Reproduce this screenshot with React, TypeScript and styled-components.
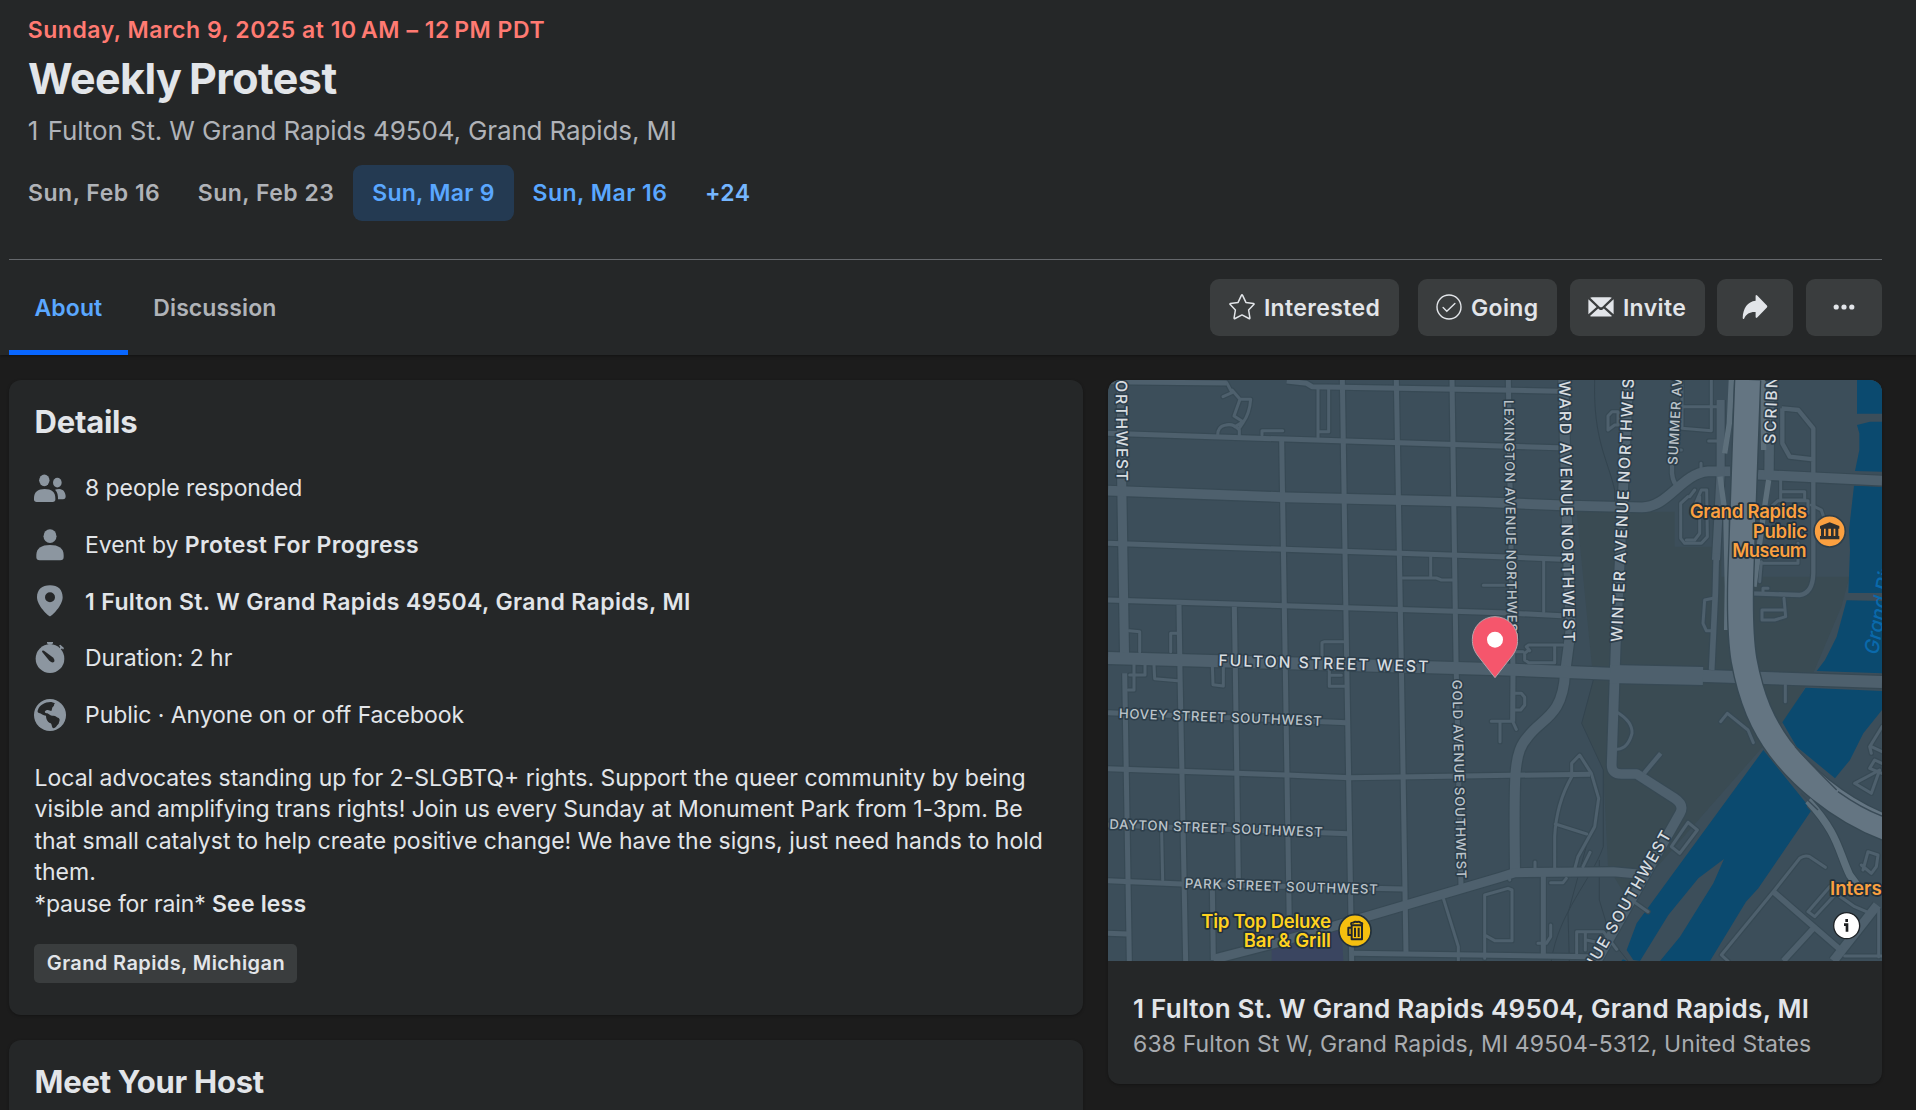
import React from "react";
import styled, { createGlobalStyle } from "styled-components";

const GlobalStyle = createGlobalStyle`
  *, *::before, *::after { box-sizing: border-box; }
  body {
    margin: 0;
    background: #1c1c1c;
    color: #e2e5e9;
    font-family: Inter, "Liberation Sans", sans-serif;
    font-size: 23px;
    overflow: hidden;
  }
`;

const Page = styled.div`
  width: 1916px;
  height: 1110px;
  overflow: hidden;
  display: flex;
  flex-direction: column;
  background: #1c1c1c;
`;

const Header = styled.header`
  flex: none;
  height: 355px;
  padding: 15.4px 34px 0 9px;
  background: #252728;
  display: flex;
  flex-direction: column;
  box-shadow: 0 1px 3px rgba(0, 0, 0, 0.35);
`;

const EventDate = styled.div`
  padding-left: 18.7px;
  line-height: 30px;
  font-weight: 600;
  letter-spacing: 0.53px;
  color: #ff7a72;
  white-space: pre;
`;

const EventTitle = styled.h1`
  margin: 7.6px 0 0;
  padding-left: 19px;
  font-size: 43px;
  line-height: 50px;
  font-weight: 700;
  letter-spacing: -0.55px;
  word-spacing: -2px;
  color: #e2e5e9;
`;

const EventPlace = styled.div`
  margin-top: 12.4px;
  padding-left: 18.7px;
  font-size: 26px;
  line-height: 32px;
  letter-spacing: -0.13px;
  color: #b0b3b8;
`;

const HouseNumber = styled.span`
  margin-right: 2.4px;
`;

const DateRow = styled.nav`
  display: flex;
  margin-top: 17.6px;
  padding-left: 0.4px;
`;

type Tone = "past" | "active" | "next" | "more";

const DateChip = styled.button<{ $tone: Tone }>`
  height: 56px;
  padding: 0 ${(p) => (p.$tone === "active" ? 19 : 18.7)}px;
  border: 0;
  border-radius: 9px;
  font: inherit;
  font-weight: 600;
  letter-spacing: ${(p) => (p.$tone === "active" ? 0.28 : 0.5)}px;
  white-space: nowrap;
  background: ${(p) => (p.$tone === "active" ? "#243a52" : "transparent")};
  color: ${(p) => (p.$tone === "past" ? "#b0b3b8" : p.$tone === "more" ? "#75b6ff" : "#5aa7ff")};
`;

const Divider = styled.div`
  height: 1px;
  margin-top: 38px;
  background: #65686c;
`;

const Toolbar = styled.div`
  flex: 1;
  display: flex;
  justify-content: space-between;
`;

const Tabs = styled.div`
  display: flex;
`;

const Tab = styled.div<{ $active?: boolean }>`
  display: flex;
  align-items: center;
  padding: 2px 25.5px 0;
  border-top: 5px solid transparent;
  border-bottom: 5px solid ${(p) => (p.$active ? "#0866ff" : "transparent")};
  font-weight: 600;
  letter-spacing: 0.1px;
  color: ${(p) => (p.$active ? "#5aa7ff" : "#b0b3b8")};
`;

const Actions = styled.div`
  display: flex;
  align-items: center;
  gap: 12.75px;
`;

const ActionButton = styled.button<{ $width: number; $after?: number }>`
  display: flex;
  align-items: center;
  justify-content: center;
  gap: 9px;
  width: ${(p) => p.$width}px;
  height: 57px;
  margin-right: ${(p) => p.$after ?? 0}px;
  padding: 0;
  border: 0;
  border-radius: 9px;
  background: #3a3d3e;
  color: #e2e5e9;
  font: inherit;
  font-weight: 600;
  letter-spacing: 0.36px;
  span {
    padding-top: 1.5px;
  }
`;

const Columns = styled.main`
  display: grid;
  grid-template-columns: 1074px 774px;
  column-gap: 25px;
  align-items: start;
  padding: 25px 0 0 9px;
`;

const Stack = styled.div`
  display: flex;
  flex-direction: column;
  gap: 25px;
`;

const Card = styled.section<{ $height: number }>`
  height: ${(p) => p.$height}px;
  padding: 22.7px 25px 0;
  border-radius: 12px;
  background: #252728;
  box-shadow: 0 1px 3px rgba(0, 0, 0, 0.3);
`;

const CardTitle = styled.h2`
  margin: 0;
  padding-left: 0.6px;
  font-size: 31px;
  line-height: 38px;
  font-weight: 700;
  letter-spacing: -0.26px;
`;

const Facts = styled.ul`
  list-style: none;
  margin: 18.9px 0 0;
  padding: 0;
`;

const Fact = styled.li<{ $strong?: boolean }>`
  display: flex;
  align-items: center;
  gap: 19px;
  height: 56.7px;
  font-weight: ${(p) => (p.$strong ? 600 : 400)};
  letter-spacing: ${(p) => (p.$strong ? "0.38px" : "-0.06px")};
  > span {
    padding-top: 0.8px;
  }
  b {
    font-weight: 600;
    letter-spacing: 0.38px;
  }
`;

const Description = styled.p`
  margin: 19.7px 0 0;
  padding-left: 0.5px;
  line-height: 31.45px;
  white-space: pre;
  b {
    font-weight: 600;
    letter-spacing: 0.18px;
  }
`;

const Tight = styled.span<{ $by: number }>`
  letter-spacing: ${(p) => -p.$by}px;
`;

const Tag = styled.span`
  display: inline-flex;
  align-items: center;
  height: 39px;
  margin-top: 24px;
  padding: 0 12px 0 12.8px;
  border-radius: 5px;
  background: #3a3d3e;
  font-size: 20px;
  font-weight: 600;
  letter-spacing: 0.39px;
`;

const PlaceCard = styled.section`
  height: 703.5px;
  border-radius: 12px;
  overflow: hidden;
  background: #252728;
  box-shadow: 0 1px 3px rgba(0, 0, 0, 0.3);
`;

const MapCanvas = styled.svg`
  display: block;
  width: 774px;
  height: 581px;
  font-family: Inter, "Liberation Sans", sans-serif;
`;

const PlaceInfo = styled.div`
  padding: 30.6px 25px 0;
`;

const PlaceName = styled.div`
  font-size: 26px;
  line-height: 34px;
  font-weight: 600;
  letter-spacing: 0.26px;
`;

const PlaceAddress = styled.div`
  margin-top: 1px;
  line-height: 34px;
  letter-spacing: 0.12px;
  color: #a9acb0;
`;

const StarIcon = () => (
  <svg width="26" height="26" viewBox="0 0 26 26" fill="none" stroke="#e2e5e9" strokeWidth="1.5" strokeLinejoin="round">
    <path d="M12.4 1.4Q13 .3 13.6 1.4L16.9 8.4 24.5 9.4Q25.6 9.7 24.8 10.6L19.6 16 20.9 23.8Q21 25 19.9 24.5L13 20.9 6.1 24.5Q5 25 5.1 23.8L6.4 16 1.2 10.6Q.4 9.7 1.5 9.4L9.1 8.4Z" />
  </svg>
);

const GoingIcon = () => (
  <svg width="26" height="26" viewBox="0 0 26 26" fill="none" stroke="#e2e5e9" strokeWidth="1.4" strokeLinecap="round">
    <circle cx="13" cy="13" r="12" />
    <path d="M7.1 13.6 10.8 17.2 18.9 9.4" />
  </svg>
);

const MailIcon = () => (
  <svg width="26" height="20" viewBox="0 0 26 20" fill="#e2e5e9">
    <path d="M2.2.7Q3 .3 4 .3H22Q23 .3 23.8.7L14.2 9.9Q13 10.8 11.8 9.9Z" />
    <path d="M.4 2.2 8.6 9.9.4 17.2Z" />
    <path d="M25.6 2.2 17.4 9.9 25.6 17.2Z" />
    <path d="M2 19.1 10.2 11.6 11.3 12.4Q13 13.4 14.7 12.4L15.8 11.6 24 19.1Q23.2 19.6 22 19.6H4Q2.8 19.6 2 19.1Z" />
  </svg>
);

const ShareIcon = () => (
  <svg width="26" height="26" viewBox="0 0 26 26" fill="#e2e5e9">
    <path d="M13.6 2.2Q13.6.4 15.2 1.4L24.9 11.6Q25.8 12.6 24.9 13.6L15.2 23.6Q13.6 24.6 13.6 22.8V18.1C7.8 17.8 4.6 19.9 2.2 24.4Q1 25.8.7 24C.9 14.6 5.6 7.5 13.6 6.8Z" />
  </svg>
);

const DotsIcon = () => (
  <svg width="24" height="8" viewBox="0 0 24 8" fill="#e2e5e9">
    <circle cx="4.2" cy="4" r="2.6" />
    <circle cx="12" cy="4" r="2.6" />
    <circle cx="19.8" cy="4" r="2.6" />
  </svg>
);

const FactIcon = ({ children }: { children: React.ReactNode }) => (
  <svg width="32" height="32" viewBox="0 0 96 96" fill="#8c96a0">
    {children}
  </svg>
);

const Map = () => (
  <MapCanvas viewBox="0 0 2322 1743">
    <rect width="2322" height="1743" fill="#3c4e5a" />
    <path
      fill="#3a4b53"
      d="M1406 395H1700V500H1840V590H2225L2200 680 2120 870 2040 1010 1956 1110 1560 1560 1500 1460 1486 1170 1421 1030 1456 900Z"
    />
    <path fill="#3a4560" d="M491 1640H700L706 1743H491Z" />
    <g fill="#0b4a6f">
      <path d="M2247 0H2322V102H2247ZM2247 135 2286 125H2322V275L2241 273 2254 210V160ZM2238 317 2322 320V645L2221 640 2226 510 2223 450ZM2216 660 2322 663V880L2126 873 2151 840 2186 770Z" />
      <path d="M2093 923 2322 933V990L2266 1060 2226 1140 2181 1195 2066 1100 2023 1027Z" />
      <path d="M1966 1110 2111 1290 1951 1525 1914 1565 1806 1743H1656L1716 1670 1816 1510 1848 1437 1771 1495 1681 1605 1596 1743 1576 1740 1556 1710 1586 1630Z" />
      <path d="M1540 1743 1545 1738 1556 1743Z" />
    </g>
    <g fill="none" stroke="#33444f" strokeWidth="3">
      <path d="M1460 0C1455 180 1500 240 1520 330V390" />
      <path d="M1456 900 1421 1030 1486 1170V1400C1450 1500 1350 1600 1330 1743M1474 1440V1560L1510 1680 1560 1743M1384 1743 1380 1600 1440 1380" />
    </g>

    {/* Casings are drawn first so that crossings stay open. */}
    {[true, false].map((casing) => {
      const extra = casing ? 7 : 0;
      return (
        <g key={String(casing)} fill="none" stroke={casing ? "#374954" : "#4e606d"} strokeLinejoin="round" strokeLinecap="round">
          <g strokeWidth={9 + extra}>
            <path d="M356 8 372 38 345 50M372 30 396 58H428Q425 100 405 128L395 143M396 58 378 108 405 125M329 165Q330 140 350 136 375 128 394 150V165M405 125 380 140" />
            <path d="M462 165V152H524M630 20V172M662 25V155H632" />
            <path d="M968 530V592M884 594H985L1000 600H1034M1126 616H1200M1307 540V695" />
            <path d="M64 752 95 755V815M207 760H188V815M642 830V788L650 785H706" />
            <path d="M111 850V885H65M60 930H78V850M138 855 140 896 209 902M313 855 315 914 346 918V855M664 870V919H710M668 886H700" />
            <path d="M161 1360 164 1500M1006 1555 1051 1700V1743M1200 1477 1205 1500" />
            <path d="M1260 812 1250 820V840L1262 848H1340M1265 812 1255 800 1262 795H1365M1340 800V848M1215 815H1245" />
            <path d="M1222 940H1240L1250 952V975L1238 990H1220M1150 1024H1214L1225 1048M1176 1024V1085" />
            <path d="M1525 995Q1575 1025 1572 1060 1560 1105 1528 1108" />
            <path d="M1391 1180V1150L1415 1125 1450 1180 1472 1255 1460 1340 1410 1430 1398 1475M1391 1190Q1345 1270 1340 1370V1470M1342 1332 1436 1362M1446 1417 1425 1460" />
            <path d="M1281 1446V1468M1130 1545 1200 1525 1212 1530V1682H1160L1130 1665ZM1328 1508H1365L1375 1495M1328 1635V1670L1315 1690H1290M1130 1665V1735M1406 1720V1655H1486L1526 1708M1432 1660V1710M1435 1680 1480 1690M1570 1560 1620 1595" />
            <path d="M1740 1327 1768 1350 1715 1420 1690 1400ZM1838 1025 1858 1000 1920 1050 1936 1088M2032 915V965" />
            <path d="M1500 150V108L1512 95H1530V135H1520Z" />
            <path d="M1722 80H1832M1722 0V145L1810 152V0M1802 183H1826M1779 280V250M1760 330 1745 350M1750 400 1780 330H1796L1798 470 1780 490H1730L1718 475V370L1740 350M1775 350V460L1760 480H1735M1720 210H1710" />
            <path d="M2018 300V360H2090V335H2020M1990 380 2010 362H2100V400M2110 375 2140 390 2150 420M1950 550H2070V490M1960 545 1955 605M1965 640V625H1980M2028 655 2033 710 2000 720 1962 720V690H2025M1815 655 1790 660 1785 730 1795 752H1810" />
            <path d="M2152 1462 2105 1430Q2090 1424 2075 1435L2000 1530 1840 1725 1860 1743M2290 1120 2285 1100 2322 1040M2290 1100 2322 1115M2240 1210 2315 1170 2290 1240ZM2322 1180 2285 1165 2300 1140 2322 1150M2265 1470 2280 1415 2310 1425 2305 1460 2290 1480 2260 1455M2165 1520 2100 1595 2120 1610 2185 1540M2190 1545 2240 1580 2275 1595" />
            <path d="M2210 1728H2322M2312 1590V1730" />
          </g>
          <g strokeWidth={15 + extra} strokeLinecap="butt">
            <path d="M213 675 216 880 233 1743M379 680 382 870 391 1500M521 180 532 870 544 1640M703 0 716 840 731 1743M865 0 880 860 894 1720M1032 0 1044 840 1059 1520M1201 0 1215 880 1214 1025" />
            <path d="M50 880 64 1743M313 1520 316 1740M1306 1480V1725" />
            <path d="M0 5 356 9M536 3 596 10 612 20 1176 30 1356 34M0 160 1176 198 1351 203M0 490 1176 530 1361 538M0 660 1176 698 1361 707" />
            <path d="M0 998 716 1028M0 1166 536 1185 726 1193 1116 1187 1446 1183M0 1335 721 1361M0 1502 221 1512 886 1527M0 1660 58 1662M736 1720 1446 1730" />
            <path d="M2021 85 2071 90 2116 145V580Q2114 640 2075 645L1930 640M2023 85V190L2045 230 2116 238M1692 240V280Q1695 310 1710 320M1608 1180 1658 1120" strokeWidth={13 + extra} />
          </g>
          <g strokeLinecap="butt">
            <path strokeWidth={27 + extra} d="M40 0 41 300 50 850" />
            <path strokeWidth={29 + extra} d="M0 332 536 352 1116 366 1386 377 1600 382C1680 384 1720 280 1800 274H1866M1950 284 2322 302" />
            <path strokeWidth={30 + extra} d="M1366 0 1376 400 1388 750 1371 880C1365 1010 1300 1015 1260 1070 1215 1120 1218 1180 1221 1478" />
            <path strokeWidth={29 + extra} d="M1561 0 1523 800 1511 1155Q1511 1182 1540 1182H1586L1700 1255Q1730 1275 1716 1300L1466 1743" />
            <path strokeWidth={27 + extra} d="M316 1738 500 1690 776 1610 1176 1492 1221 1478 1516 1475 1590 1482M2176 1743 2308 1575" />
            <path strokeWidth={17 + extra} d="M1996 1535 2200 1712M2026 1743 2116 1645" />
            <path strokeWidth={36 + extra} d="M0 834 1176 868 1506 881 1796 888 2322 906" />
            <path strokeWidth={54 + extra} d="M1506 882 1785 888" />
            <path strokeWidth={24 + extra} d="M1838 60 1838 280 1824 540" />
            <path strokeWidth={17 + extra} d="M1825 520 1822 640 1811 870" />
            <path strokeWidth={28 + extra} d="M1985 60 1983 285" />
          </g>
        </g>
      );
    })}
    <path stroke="#3c4e5a" strokeWidth="22" d="M2248 112H2322M2210 650H2322" />

    <g fill="none">
      <path stroke="#5d6f7b" strokeWidth="16" d="M1870 0 1864 130 1850 220M1836 290 1854 420 1858 620 1856 750M1982 300 1964 420 1938 620M1965 0 1967 210" />
      <path stroke="#374954" strokeWidth="82" d="M1919 0 1911 220 1898 600C1896 700 1898 780 1908 840 1930 960 1965 1035 2016 1105 2070 1175 2180 1285 2340 1345" />
      <path stroke="#647582" strokeWidth="74" d="M1919 0 1911 220 1898 600C1896 700 1898 780 1908 840 1930 960 1965 1035 2016 1105 2070 1175 2180 1285 2340 1345" />
      <path stroke="#374954" strokeWidth="28" d="M2106 1270C2190 1360 2190 1410 2225 1485L2250 1520" />
      <path stroke="#5d6f7b" strokeWidth="22" d="M2100 1262C2190 1360 2190 1410 2225 1485L2255 1525" />
      <path stroke="#3a4b57" strokeWidth="4" d="M2061 1100Q2120 1165 2186 1230M2190 1235Q2260 1285 2322 1308M2078 1240 2130 1290" />
    </g>

    <g fill="#d8dde1" stroke="#2d3e4a" strokeWidth="10" strokeLinejoin="round" fontWeight="550" style={{ paintOrder: "stroke" }}>
      <g fontSize="47">
        <text transform="translate(23 1) rotate(89.4)" textLength="302">ORTHWEST</text>
        <text transform="translate(1353 3) rotate(89)" textLength="783">WARD AVENUE NORTHWEST</text>
        <text transform="translate(1542 787) rotate(-87.4)" textLength="828">WINTER AVENUE NORTHWEST</text>
        <text transform="translate(2002 192) rotate(-88)" textLength="202">SCRIBN</text>
        <text transform="translate(331 857) rotate(1.75)" textLength="630">FULTON STREET WEST</text>
        <text transform="translate(1453 1778) rotate(-60.1)" textLength="477">NUE SOUTHWEST</text>
      </g>
      <g fontSize="39.5" fill="#bcc4ca" fontWeight="500">
        <text transform="translate(1188 60) rotate(89.1)" textLength="724">LEXINGTON AVENUE NORTHWEST</text>
        <text transform="translate(1708 255) rotate(-86.9)" textLength="262">SUMMER AV</text>
        <text transform="translate(1033 900) rotate(88.7)" textLength="596">GOLD AVENUE SOUTHWEST</text>
        <text transform="translate(32 1014) rotate(2.2)" textLength="609">HOVEY STREET SOUTHWEST</text>
        <text transform="translate(4 1346) rotate(2.2)" textLength="640">DAYTON STREET SOUTHWEST</text>
        <text transform="translate(230 1524) rotate(1.8)" textLength="579">PARK STREET SOUTHWEST</text>
      </g>
    </g>
    <text transform="translate(2310 826) rotate(-80)" fontSize="60" fontStyle="italic" fontWeight="500" fill="#0a69ab">Grand River</text>

    <g fontSize="56" fontWeight="600" stroke="#22303a" strokeWidth="10" strokeLinejoin="round" style={{ paintOrder: "stroke" }}>
      <g fill="#fba040">
        <text x="1745" y="415" textLength="352">Grand Rapids</text>
        <text x="1934" y="473" textLength="163">Public</text>
        <text x="1873" y="532" textLength="223">Museum</text>
        <text x="2166" y="1545">Intersection</text>
      </g>
      <g fill="#ffd21f">
        <text x="280" y="1643" textLength="389">Tip Top Deluxe</text>
        <text x="407" y="1702" textLength="262">Bar &amp; Grill</text>
      </g>
    </g>

    <circle cx="2165" cy="454" r="47" fill="#fba040" stroke="#2d3e4a" strokeWidth="5" />
    <g fill="#2d2f30">
      <path d="M2136 446V438L2165 427 2194 438V446ZM2139 446H2148V468H2139ZM2153 446H2161V468H2153ZM2169 446H2177V468H2169ZM2182 446H2191V468H2182ZM2136 468H2194V478H2136Z" />
    </g>
    <circle cx="741" cy="1652" r="48" fill="#f5bf0f" stroke="#22303a" strokeWidth="5" />
    <g fill="none" stroke="#22262a" strokeWidth="6" strokeLinejoin="round">
      <path d="M731 1636H762V1678H731ZM730 1634Q727 1627 736 1628 740 1624 747 1626 755 1624 757 1628 765 1628 762 1634M731 1643H721V1665H731M741 1643V1671M752 1643V1671" />
    </g>

    <circle cx="2216" cy="1637" r="39" fill="#fff" stroke="#1d2226" strokeWidth="4" />
    <g fill="none" stroke="#1d1f21" strokeWidth="8">
      <path d="M2208 1634H2217V1655M2216 1617V1626" />
    </g>

    <path
      d="M1161 893 1110 828C1098 812 1093 797 1093 778A68 68 0 0 1 1229 778C1229 797 1224 812 1212 828Z"
      fill="#f5566c"
      stroke="#b9a3ab"
      strokeWidth="3"
    />
    <circle cx="1161" cy="779" r="24" fill="#fff" />
  </MapCanvas>
);

export default function App() {
  return (
    <>
      <GlobalStyle />
      <Page>
        <Header>
          <EventDate>{"Sunday, March 9, 2025 at 10\u2009AM – 12\u2009PM PDT"}</EventDate>
          <EventTitle>Weekly Protest</EventTitle>
          <EventPlace>
            <HouseNumber>1</HouseNumber> Fulton St. W Grand Rapids 49504, Grand Rapids, MI
          </EventPlace>
          <DateRow>
            <DateChip $tone="past">Sun, Feb 16</DateChip>
            <DateChip $tone="past">Sun, Feb 23</DateChip>
            <DateChip $tone="active">Sun, Mar 9</DateChip>
            <DateChip $tone="next">Sun, Mar 16</DateChip>
            <DateChip $tone="more">+24</DateChip>
          </DateRow>
          <Divider />
          <Toolbar>
            <Tabs>
              <Tab $active>About</Tab>
              <Tab>Discussion</Tab>
            </Tabs>
            <Actions>
              <ActionButton $width={189} $after={6}>
                <StarIcon />
                <span>Interested</span>
              </ActionButton>
              <ActionButton $width={139}>
                <GoingIcon />
                <span>Going</span>
              </ActionButton>
              <ActionButton $width={135}>
                <MailIcon />
                <span>Invite</span>
              </ActionButton>
              <ActionButton $width={76}>
                <ShareIcon />
              </ActionButton>
              <ActionButton $width={76}>
                <DotsIcon />
              </ActionButton>
            </Actions>
          </Toolbar>
        </Header>

        <Columns>
          <Stack>
            <Card $height={635}>
              <CardTitle>Details</CardTitle>
              <Facts>
                <Fact>
                  <FactIcon>
                    <ellipse cx="31" cy="25" rx="15.5" ry="17.5" />
                    <ellipse cx="70" cy="32" rx="13" ry="14.5" />
                    <path d="M0 78C0 60 12 51 32 51S64 60 64 78V82Q64 90 56 90H8Q0 90 0 82Z" />
                    <path d="M63 53Q68 51 76 51C88 51 95 62 95 73Q95 82 87 82H72C72 70 71 61 63 53Z" />
                  </FactIcon>
                  <span>8 people responded</span>
                </Fact>
                <Fact>
                  <FactIcon>
                    <ellipse cx="48" cy="21.5" rx="19.5" ry="20.5" />
                    <path d="M7 78C7 58 22 48 48 48S89 58 89 78V84Q89 94 79 94H17Q7 94 7 84Z" />
                  </FactIcon>
                  <span>
                    Event by <b>Protest For Progress</b>
                  </span>
                </Fact>
                <Fact $strong>
                  <FactIcon>
                    <path
                      fillRule="evenodd"
                      d="M48 94C43 94 9 62 9 37 9 14 24 1 48 1S86 14 86 37C86 62 53 94 48 94ZM48 22A15 15 0 1 0 48 52 15 15 0 1 0 48 22Z"
                    />
                  </FactIcon>
                  <span>1 Fulton St. W Grand Rapids 49504, Grand Rapids, MI</span>
                </Fact>
                <Fact>
                  <FactIcon>
                    <circle cx="48" cy="50" r="43" />
                    <path d="M39 0H57V4L52 8H44L39 4ZM75 11 79 8 90 18 87 23 84 19 80 23 76 19 79 15Z" />
                    <path fill="#252728" d="M24 29Q24 24 30 26L56 46Q64 54 60 60 54 64 46 56Z" />
                  </FactIcon>
                  <span>Duration: 2 hr</span>
                </Fact>
                <Fact>
                  <FactIcon>
                    <circle cx="48" cy="48" r="48" />
                    <path
                      fill="#252728"
                      d="M12 32C17 18 34 8 52 9L63 13C58 16 63 20 57 23 53 26 55 31 52 36 47 36 44 31 37 34 29 38 33 43 40 43 46 45 50 52 58 50 66 50 68 55 74 57 80 62 75 68 74 74 67 80 66 87 58 88 52 85 55 77 50 73 39 68 36 58 36 50 27 50 22 43 15 42 10 40 10 36 12 32Z"
                    />
                  </FactIcon>
                  <span>Public · Anyone on or off Facebook</span>
                </Fact>
              </Facts>
              <Description>
                {"Local advocates standing up for 2-SLGBTQ+ rights. Support the queer community by being\n"}
                <Tight $by={0.03}>
                  {"visible and amplifying trans rights! Join us every Sunday at Monument Park from 1-3pm. Be\n"}
                </Tight>
                {"that small catalyst to help create positive change! We have the signs, just need hands to hold\n"}
                {"them.\n"}
                <Tight $by={0.14}>{"*pause for rain* "}</Tight>
                <b>See less</b>
              </Description>
              <Tag>Grand Rapids, Michigan</Tag>
            </Card>
            <Card $height={200}>
              <CardTitle>Meet Your Host</CardTitle>
            </Card>
          </Stack>

          <PlaceCard>
            <Map />
            <PlaceInfo>
              <PlaceName>1 Fulton St. W Grand Rapids 49504, Grand Rapids, MI</PlaceName>
              <PlaceAddress>638 Fulton St W, Grand Rapids, MI 49504-5312, United States</PlaceAddress>
            </PlaceInfo>
          </PlaceCard>
        </Columns>
      </Page>
    </>
  );
}
